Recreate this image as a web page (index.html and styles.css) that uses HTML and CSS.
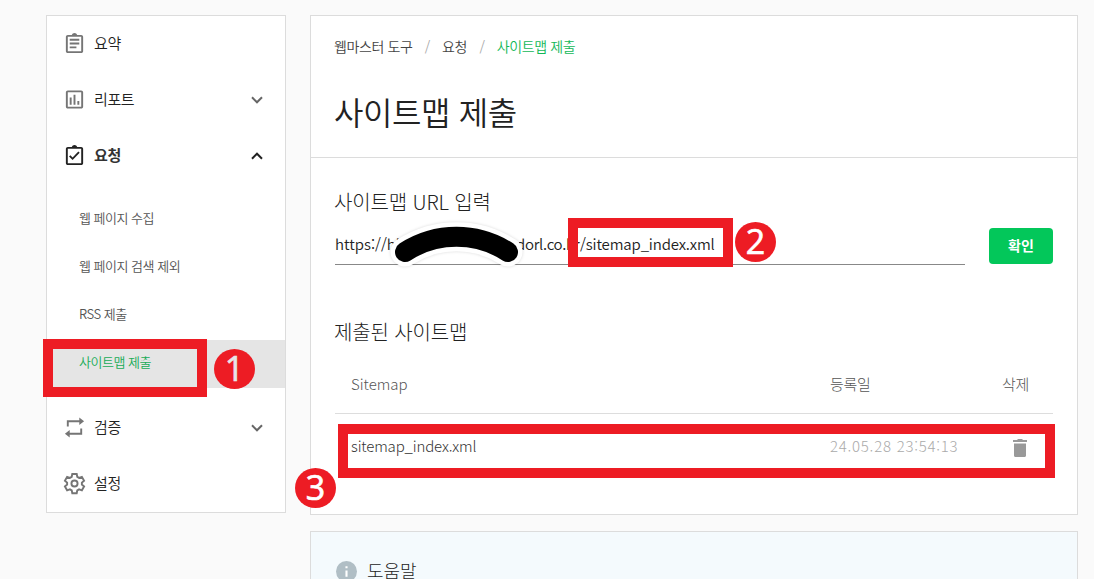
FILE: index.html
```html
<!DOCTYPE html>
<html lang="ko">
<head>
    <meta charset="UTF-8">
    <meta name="viewport" content="width=device-width, initial-scale=1.0">
    <title>사이트맵 제출</title>
    <link rel="stylesheet" href="styles.css">
</head>
<body>

    <div class="page">
        <!-- 왼쪽 메뉴 -->
        <nav class="sidebar">
            <a class="menu-item">
                <svg class="menu-icon" viewBox="0 0 24 24"><path d="M7 15h7v2H7zm0-4h10v2H7zm0-4h10v2H7zm12-4h-4.180C14.400 1.840 13.300 1 12 1s-2.400.840-2.820 2H5c-1.100 0-2 .900-2 2v15c0 1.100.900 2 2 2h14c1.100 0 2-.900 2-2V5c0-1.100-.900-2-2-2zm0 17H5V5h14z"/></svg>
                <span>요약</span>
            </a>
            <a class="menu-item">
                <svg class="menu-icon" viewBox="0 0 24 24"><path fill-rule="evenodd" d="M5 2.500h14c1.100 0 2 .900 2 2v15c0 1.100-.900 2-2 2H5c-1.100 0-2-.900-2-2v-15c0-1.100.900-2 2-2zm0 2v15h14v-15zM7 10h2v7.500H7zm4-3h2v10.500h-2zm4 6.500h2v4h-2z"/></svg>
                <span>리포트</span>
                <svg class="arrow" viewBox="0 0 12 8"><path d="M1 1.300l5 5 5-5"/></svg>
            </a>
            <a class="menu-item open">
                <svg class="menu-icon" viewBox="0 0 24 24"><path d="M19 3h-4.180C14.400 1.840 13.300 1 12 1s-2.400.840-2.820 2H5c-1.100 0-2 .900-2 2v15c0 1.100.900 2 2 2h14c1.100 0 2-.900 2-2V5c0-1.100-.900-2-2-2zm0 17H5V5h14zM17.400 9.200L16 7.800l-6 6.200-2.300-2.300-1.400 1.400L10 16.800z"/></svg>
                <span>요청</span>
                <svg class="arrow" viewBox="0 0 12 8"><path d="M1 6.700l5-5 5 5"/></svg>
            </a>
            <div class="submenu">
                <a>웹 페이지 수집</a>
                <a>웹 페이지 검색 제외</a>
                <a>RSS 제출</a>
                <a class="active">사이트맵 제출</a>
            </div>
            <a class="menu-item">
                <svg class="menu-icon" viewBox="0 0 24 24"><path d="M4 11V4.500h13V1.500l5 4-5 4v-3H6V11zM20 13v6.500H7v3l-5-4 5-4v3h11V13z"/></svg>
                <span>검증</span>
                <svg class="arrow" viewBox="0 0 12 8"><path d="M1 1.300l5 5 5-5"/></svg>
            </a>
            <a class="menu-item">
                <svg class="menu-icon gear" viewBox="0 0 24 24"><path d="M9.700 2h4.600l.6 3 1.900 1.100 2.900-1 2.300 4-2.300 2v2l2.300 2-2.300 4-2.900-1-1.900 1.100-.6 3H9.700l-.6-3-1.900-1.100-2.900 1-2.300-4 2.300-2v-2L2 9.100l2.300-4 2.900 1L9.100 5z"/><circle cx="12" cy="12" r="3.200"/></svg>
                <span>설정</span>
            </a>
        </nav>

        <div class="content">
            <main class="card">
                <header class="card-header">
                    <div class="breadcrumb">
                        <span>웹마스터 도구</span><i>/</i><span>요청</span><i>/</i><span class="current">사이트맵 제출</span>
                    </div>
                    <h1>사이트맵 제출</h1>
                </header>

                <h2>사이트맵 URL 입력</h2>
                <div class="url-form">
                    <div class="url-field"><span class="url-start">https://hi</span><span class="url-host">dorl.co.kr</span><span class="url-path">/sitemap_index.xml</span></div>
                    <button class="submit-button">확인</button>
                </div>

                <h2 class="list-title">제출된 사이트맵</h2>
                <div class="table">
                    <div class="row head">
                        <span>Sitemap</span>
                        <span>등록일</span>
                        <span>삭제</span>
                    </div>
                    <div class="row">
                        <span class="file">sitemap_index.xml</span>
                        <span class="date">24.05.28 23:54:13</span>
                        <svg class="trash" viewBox="0 0 14 18"><path d="M1 4.500h12v12c0 .900-.600 1.500-1.500 1.500h-9C1.600 18 1 17.400 1 16.500zM0 1h4l1-1h4l1 1h4v2H0z"/></svg>
                    </div>
                </div>
            </main>

            <section class="card help">
                <svg class="info" viewBox="0 0 20 20"><circle cx="10" cy="10" r="10"/><path d="M9 5h2v2H9zm0 4h2v6H9z"/></svg>
                <span>도움말</span>
            </section>
        </div>
    </div>

    <!-- 주소 가림 -->
    <svg class="mask" viewBox="0 0 140 60"><path class="mask-outline" d="M20 34A95 95 0 0 1 123 34"/><path d="M20 34A95 95 0 0 1 123 34"/></svg>

    <!-- 순서 표시 -->
    <div class="mark mark-menu"></div>
    <div class="mark mark-url"></div>
    <div class="mark mark-row"></div>
    <div class="number number-1">1</div>
    <div class="number number-2">2</div>
    <div class="number number-3">3</div>

</body>
</html>
```
FILE: styles.css
```css
* {
    box-sizing: border-box;
}

body {
    margin: 0;
    height: 579px;
    overflow: hidden;
    position: relative;
    background: #fafafa;
    color: #222;
    font-family: 'Noto Sans CJK KR', sans-serif;
    font-weight: 350;
}

.page {
    display: flex;
    align-items: flex-start;
    gap: 24px;
    height: 579px;
    padding: 15px 16px 0 46px;
}

.sidebar {
    width: 240px;
    height: 498px;
    background: #fff;
    border: 1px solid #dcdcdc;
}

.menu-item {
    display: flex;
    align-items: center;
    height: 56px;
    padding: 0 22px 0 16px;
    font-size: 15px;
    letter-spacing: -0.4px;
}

.menu-item span {
    padding-bottom: 3px;
}

.menu-icon {
    width: 23px;
    height: 23px;
    margin: 0 8px 1px 0;
    fill: #757575;
}

.gear {
    fill: none;
    stroke: #757575;
    stroke-width: 2;
}

.arrow {
    width: 12px;
    height: 8px;
    margin-left: auto;
    fill: none;
    stroke: #666;
    stroke-width: 2;
}

.open {
    font-weight: 700;
    color: #333;
}

.open .menu-icon {
    fill: #222;
}

.open .arrow {
    stroke: #222;
}

.submenu {
    padding: 12px 0 12px;
}

.submenu a {
    display: block;
    height: 48px;
    padding-left: 32px;
    line-height: 44px;
    font-size: 13px;
    letter-spacing: -0.5px;
    color: #555;
}

.submenu .active {
    background: #e5e5e5;
    color: #19ac57;
}

.content {
    display: flex;
    flex: 1;
    flex-direction: column;
    gap: 16px;
    height: 564px;
}

.card {
    flex: none;
    height: 500px;
    background: #fff;
    border: 1px solid #dcdcdc;
}

.card-header {
    height: 142px;
    padding: 19px 24px 0 23px;
    border-bottom: 1px solid #dcdcdc;
}

.breadcrumb {
    height: 22px;
    line-height: 22px;
    font-size: 14px;
    letter-spacing: -0.4px;
    color: #444;
}

.breadcrumb i {
    margin: 0 12.3px;
    font-style: normal;
    color: #aaa;
}

.breadcrumb .current {
    color: #12b857;
}

h1 {
    margin: 31px 0 0;
    line-height: 46px;
    font-size: 32px;
    font-weight: 350;
    letter-spacing: -0.4px;
}

h2 {
    margin: 30px 23px 0;
    height: 28px;
    line-height: 28px;
    font-size: 20px;
    font-weight: 300;
    letter-spacing: -0.15px;
    color: #222;
}

.url-form {
    display: flex;
    gap: 24px;
    margin: 12px 24px 0;
}

.url-field {
    display: flex;
    width: 630px;
    height: 37px;
    line-height: 32px;
    border-bottom: 1px solid #888;
    font-size: 15px;
}

.url-start {
    width: 181px;
}

.url-host {
    width: 64px;
    letter-spacing: -0.3px;
}

.url-path {
    letter-spacing: -0.15px;
}

.submit-button {
    width: 64px;
    height: 36px;
    padding: 0 0 2px;
    border: none;
    border-radius: 4px;
    background: #03c75a;
    color: #fff;
    font-family: inherit;
    font-size: 14px;
    font-weight: 700;
}

.list-title {
    margin-top: 53px;
}

.table {
    margin: 8px 24px 0;
}

.row {
    display: grid;
    grid-template-columns: 479px 172px 1fr;
    align-items: center;
    height: 66px;
    padding-left: 16px;
    font-size: 15px;
    font-weight: 300;
    color: #333;
}

.head {
    height: 60px;
    padding-bottom: 1px;
    border-bottom: 1px solid #ddd;
    color: #555;
}

.head span + span {
    letter-spacing: -0.3px;
}

.file {
    padding-bottom: 3px;
    letter-spacing: -0.15px;
}

.date {
    padding-bottom: 4px;
    color: #aaa;
    letter-spacing: 0.75px;
}

.trash {
    width: 14px;
    height: 18px;
    margin: 1px 0 0 11px;
    fill: #999;
}

.help {
    display: flex;
    flex: 1;
    align-items: flex-start;
    height: auto;
    border-bottom: none;
    padding: 29px 0 0 25px;
    background: #f4fafd;
    font-size: 18px;
    font-weight: 300;
    line-height: 19px;
    overflow: hidden;
}

.info {
    width: 21px;
    height: 21px;
    margin-right: 10px;
    fill: #b0bec5;
}

.info path {
    fill: #fff;
}

.mask {
    position: absolute;
    left: 385px;
    top: 218px;
    width: 140px;
    height: 60px;
    fill: none;
    stroke: #000;
    stroke-width: 20;
    stroke-linecap: round;
}

.mask-outline {
    stroke: #fff;
    stroke-width: 29;
    filter: drop-shadow(0 0 1.5px rgba(0, 0, 0, 0.15));
}

.mark {
    position: absolute;
    border: 10px solid #ed1c24;
}

.mark-menu {
    left: 43px;
    top: 339px;
    width: 164px;
    height: 58px;
}

.mark-url {
    left: 568px;
    top: 218px;
    width: 165px;
    height: 49px;
}

.mark-row {
    left: 338px;
    top: 424px;
    width: 717px;
    height: 54px;
}

.number {
    position: absolute;
    width: 41px;
    height: 40px;
    border-radius: 50%;
    background: #ed1c24;
    color: #fff;
    font-family: 'Open Sans', sans-serif;
    font-size: 34px;
    font-weight: 500;
    line-height: 39px;
    text-align: center;
    -webkit-text-stroke: 0.7px;
}

.number-1 {
    left: 214px;
    top: 349px;
    color: #e6e6e6;
}

.number-2 {
    left: 735px;
    top: 222px;
}

.number-3 {
    left: 295px;
    top: 468px;
}
```
